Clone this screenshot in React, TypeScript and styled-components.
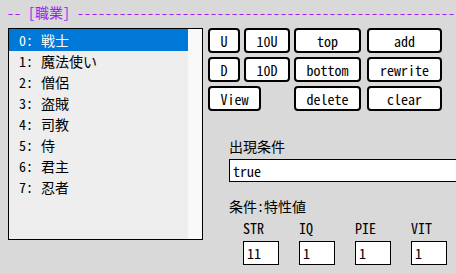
import React from "react"
import styled, { createGlobalStyle } from "styled-components"

const GlobalStyle = createGlobalStyle`
    html, body {
        margin: 0;
        padding: 0;
        background: #d9d9d9;
        overflow: hidden;
    }
    body {
        font-family: "Noto Sans Mono CJK JP", "Liberation Mono", "Noto Sans CJK JP", monospace;
        font-size: 14px;
        color: #000;
    }
`

const jobs = ["戦士", "魔法使い", "僧侶", "盗賊", "司教", "侍", "君主", "忍者"]

const stats = [
    { name: "STR", value: "11" },
    { name: "IQ", value: "1" },
    { name: "PIE", value: "1" },
    { name: "VIT", value: "1" },
]

type Btn = { label: string; col: number; row: number; wide?: boolean }

const buttons: Btn[] = [
    { label: "U", col: 1, row: 1 },
    { label: "10U", col: 2, row: 1 },
    { label: "top", col: 3, row: 1 },
    { label: "add", col: 4, row: 1 },
    { label: "D", col: 1, row: 2 },
    { label: "10D", col: 2, row: 2 },
    { label: "bottom", col: 3, row: 2 },
    { label: "rewrite", col: 4, row: 2 },
    { label: "View", col: 1, row: 3, wide: true },
    { label: "delete", col: 3, row: 3 },
    { label: "clear", col: 4, row: 3 },
]

export default function App() {
    return (
        <Page>
            <GlobalStyle />
            <Header>{"-- [職業] " + "-".repeat(54)}</Header>
            <Main>
                <ListBox>
                    <Items>
                        {jobs.map((job, i) => (
                            <Item key={job} $selected={i === 0}>
                                <Num>{i}:</Num>
                                <span>{job}</span>
                            </Item>
                        ))}
                    </Items>
                    <Track />
                </ListBox>
                <Side>
                    <ButtonGrid>
                        {buttons.map(b => (
                            <Button key={b.label} $col={b.col} $row={b.row} $wide={b.wide}>
                                {b.label}
                            </Button>
                        ))}
                    </ButtonGrid>
                    <Form>
                        <Label>出現条件</Label>
                        <WideInput defaultValue="true" />
                        <Label $top={16}>条件:特性値</Label>
                        <Stats>
                            {stats.map(s => (
                                <Stat key={s.name}>
                                    <StatName>{s.name}</StatName>
                                    <SmallInput defaultValue={s.value} />
                                </Stat>
                            ))}
                        </Stats>
                    </Form>
                </Side>
            </Main>
        </Page>
    )
}

const Page = styled.div`
    width: 456px;
    height: 274px;
    padding: 2px 0 0 7px;
    box-sizing: border-box;
    overflow: hidden;
`

const Header = styled.div`
    height: 20px;
    line-height: 20px;
    color: #a020f0;
    white-space: pre;
`

const Main = styled.div`
    display: flex;
    gap: 5px;
    margin-top: 6px;
    margin-left: 1px;
`

const ListBox = styled.div`
    display: flex;
    width: 195px;
    height: 212px;
    border: 1px solid #000;
    box-sizing: border-box;
    background: #eeeeee;
    flex-shrink: 0;
`

const Items = styled.div`
    flex: 1;
    display: flex;
    flex-direction: column;
`

const Item = styled.div<{ $selected?: boolean }>`
    display: flex;
    height: 21px;
    line-height: 21px;
    padding-left: 10px;
    background: ${p => (p.$selected ? "#0078d7" : "transparent")};
    color: ${p => (p.$selected ? "#fff" : "#000")};
    &:first-child {
        height: 22px;
        line-height: 22px;
    }
`

const Num = styled.span`
    width: 22px;
`

const Track = styled.div`
    width: 14px;
    background: #f9f9f9;
`

const Side = styled.div`
    display: flex;
    flex-direction: column;
`

const ButtonGrid = styled.div`
    display: grid;
    grid-template-columns: 32px 46px 67px 77px;
    grid-template-rows: repeat(3, 25px);
    column-gap: 4px;
    row-gap: 4px;
`

const Button = styled.button<{ $col: number; $row: number; $wide?: boolean }>`
    grid-column: ${p => p.$col} / span ${p => (p.$wide ? 2 : 1)};
    grid-row: ${p => p.$row};
    justify-self: ${p => (p.$col === 4 ? "end" : "start")};
    width: ${p => (p.$wide ? "53px" : p.$col === 4 ? "75px" : "100%")};
    height: 25px;
    padding: 0;
    border: 2px solid #000;
    border-radius: 4px;
    background: #fff;
    font: inherit;
    color: #000;
`

const Form = styled.div`
    display: flex;
    flex-direction: column;
    margin: 27px 0 0 21px;
`

const Label = styled.div<{ $top?: number }>`
    height: 16px;
    line-height: 16px;
    margin-top: ${p => p.$top || 0}px;
    margin-bottom: 5px;
`

const WideInput = styled.input`
    width: 260px;
    height: 23px;
    box-sizing: border-box;
    border: 1px solid #000;
    padding: 0 3px;
    font: inherit;
    background: #fff;
    outline: none;
`

const Stats = styled.div`
    display: flex;
    gap: 20px;
    margin: 2px 0 0 14px;
`

const Stat = styled.div`
    display: flex;
    flex-direction: column;
    gap: 6px;
`

const StatName = styled.div`
    height: 14px;
    line-height: 14px;
`

const SmallInput = styled.input`
    width: 36px;
    height: 24px;
    box-sizing: border-box;
    border: 1px solid #000;
    padding: 0 3px;
    font: inherit;
    background: #fff;
    outline: none;
`
